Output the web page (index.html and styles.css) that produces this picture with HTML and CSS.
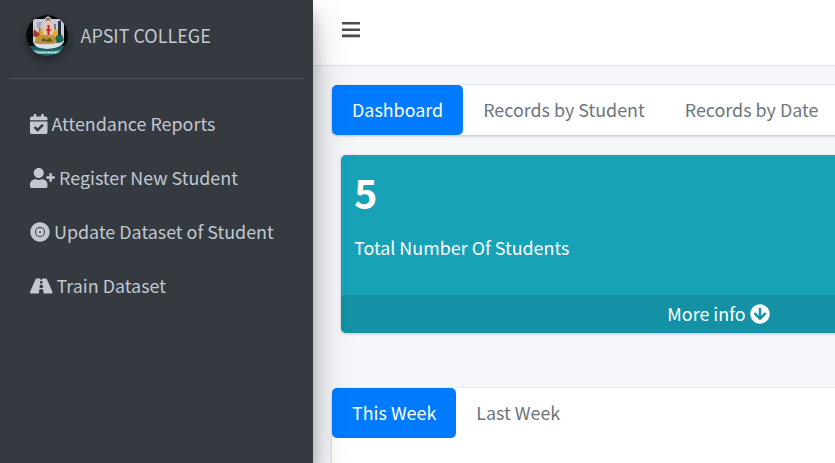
FILE: index.html
```html
<!DOCTYPE html>
<html lang="en">
<head>
<meta charset="utf-8">
<title>APSIT College</title>
<link rel="stylesheet" href="styles.css">
</head>
<body>
<div class="wrapper">
  <aside class="sidebar">
    <div class="brand">
      <svg class="logo" viewBox="0 0 42 41" preserveAspectRatio="none">
        <defs><clipPath id="disc"><ellipse cx="21" cy="20.5" rx="21" ry="20.5"/></clipPath></defs>
        <g clip-path="url(#disc)">
          <rect width="42" height="42" fill="#050608"/>
          <path d="M7 4l11 0 4-3 4 3 12 0v23q-3 6-16 9Q9 34 7 27z" fill="#c9cbd6"/>
          <path d="M11 7h5l-2 6h-3z" fill="#a3a6b2"/>
          <path d="M32 6h3v18h-3z" fill="#28313b"/>
          <path d="M28 9h2v6h-2z" fill="#777c88"/>
          <path d="M8 14l4 4 2-6 2 9-4 2-5-2z" fill="#a33a2e"/>
          <path d="M13 16l4-3h9l6 3 0 5-4 2H14z" fill="#e3a62c"/>
          <path d="M19 5q3-3 6 0l1 5 3 5-3 5h-8l-2-5 3-4z" fill="#e6c4ae"/>
          <path d="M19.500 4q2.500-3 5 0v1.500h-5z" fill="#8a6f60"/>
          <path d="M21.500 10h2v4l2 1-2 1v4h-2v-4l-2-1 2-1z" fill="#c3222b"/>
          <path d="M30 21l6-1 2 5-4 4-6-2z" fill="#1c6557"/>
          <path d="M11 21l8-1 9 1 3 6-4 2H12l-4-1z" fill="#b5943c"/>
          <path d="M16 24l3-1 1 2 4-2 3 3-5 1-3-1-3 1z" fill="#695325"/>
          <path d="M8 28q14 4 28-1-2 6-14 7Q11 34 8 28z" fill="#dedfe5"/>
          <path d="M0 31l8 0q13 6 27 0l7-1v12H0z" fill="#17605f"/>
          <path d="M7 35q15 2 29 0l-2 4H9z" fill="#62b5b5"/>
          <path d="M10 37.500h23" stroke="#c6e2df" stroke-width="1" stroke-dasharray="2 1"/>
        </g>
      </svg>
      <span class="brand-name">APSIT COLLEGE</span>
    </div>
    <nav class="menu">
      <a class="menu-item"><svg class="icon cal" viewBox="0 0 448 512"><path d="M436 160H12c-6.627 0-12-5.373-12-12v-36c0-26.51 21.49-48 48-48h48V12c0-6.627 5.373-12 12-12h40c6.627 0 12 5.373 12 12v52h128V12c0-6.627 5.373-12 12-12h40c6.627 0 12 5.373 12 12v52h48c26.51 0 48 21.49 48 48v36c0 6.627-5.373 12-12 12zM12 192h424c6.627 0 12 5.373 12 12v260c0 26.51-21.49 48-48 48H48c-26.51 0-48-21.49-48-48V204c0-6.627 5.373-12 12-12zm333.296 95.947l-28.169-28.398c-4.667-4.705-12.265-4.736-16.97-.068L194.12 364.665l-45.98-46.352c-4.667-4.705-12.266-4.736-16.971-.068l-28.397 28.17c-4.705 4.667-4.736 12.265-.068 16.97l82.601 83.269c4.667 4.705 12.265 4.736 16.97.068l142.953-141.805c4.705-4.667 4.736-12.265.068-16.97z"/></svg><span>Attendance Reports</span></a>
      <a class="menu-item"><svg class="icon user" viewBox="0 0 640 512"><path d="M624 208h-64v-64c0-8.8-7.2-16-16-16h-32c-8.8 0-16 7.2-16 16v64h-64c-8.8 0-16 7.2-16 16v32c0 8.8 7.2 16 16 16h64v64c0 8.8 7.2 16 16 16h32c8.8 0 16-7.2 16-16v-64h64c8.8 0 16-7.2 16-16v-32c0-8.8-7.2-16-16-16zm-400 48c70.7 0 128-57.3 128-128S294.7 0 224 0 96 57.3 96 128s57.3 128 128 128zm89.6 32h-16.7c-22.2 10.2-46.9 16-72.9 16s-50.6-5.8-72.9-16h-16.7C60.2 288 0 348.2 0 422.4V464c0 26.5 21.5 48 48 48h352c26.5 0 48-21.5 48-48v-41.6c0-74.2-60.2-134.4-134.4-134.4z"/></svg><span>Register New Student</span></a>
      <a class="menu-item"><svg class="icon" viewBox="0 0 512 512"><path d="M256 152a104 104 0 1 0 104 104 104 104 0 0 0-104-104zm0 128a24 24 0 1 1 24-24 24 24 0 0 1-24 24zm0-272C119 8 8 119 8 256s111 248 248 248 248-111 248-248S393 8 256 8zm0 376a128 128 0 1 1 128-128 128 128 0 0 1-128 128z"/></svg><span>Update Dataset of Student</span></a>
      <a class="menu-item"><svg class="icon road" viewBox="0 0 576 512"><path d="M573.19 402.67l-139.79-320C428.43 71.29 417.6 64 405.68 64h-97.59l2.45 23.16c.5 4.72-3.21 8.84-7.96 8.84h-29.16c-4.75 0-8.46-4.12-7.96-8.84L267.91 64h-97.59c-11.93 0-22.76 7.29-27.73 18.67L2.8 402.67C-6.45 423.86 8.31 448 30.54 448h196.84l10.31-97.68c.86-8.14 7.72-14.32 15.91-14.32h68.8c8.19 0 15.05 6.18 15.91 14.32L348.62 448h196.84c22.23 0 36.99-24.14 27.73-45.33zM260.4 135.16a8 8 0 0 1 7.96-7.16h39.29c4.09 0 7.53 3.09 7.96 7.16l4.6 43.58c.75 7.09-4.81 13.26-11.93 13.26h-40.54c-7.13 0-12.68-6.17-11.93-13.26l4.59-43.58zM315.64 304h-55.29c-9.5 0-16.91-8.23-15.91-17.68l5.07-48c.86-8.14 7.72-14.32 15.91-14.32h45.15c8.19 0 15.05 6.18 15.91 14.32l5.07 48c1 9.45-6.41 17.68-15.91 17.68z"/></svg><span>Train Dataset</span></a>
    </nav>
  </aside>
  <main class="main">
    <header class="topbar">
      <svg class="bars" viewBox="0 0 18 16"><path d="M0 0h18v2.6H0zM0 6.4h18V9H0zM0 12.6h18v2.6H0z"/></svg>
    </header>
    <section class="content">
      <div class="card tabs">
        <a class="tab active">Dashboard</a>
        <a class="tab">Records by Student</a>
        <a class="tab">Records by Date</a>
      </div>
      <div class="stat">
        <div class="stat-body">
          <h3 class="stat-value">5</h3>
          <p class="stat-label">Total Number Of Students</p>
        </div>
        <a class="stat-footer"><span>More info</span><svg class="icon" viewBox="0 0 512 512"><path fill-rule="evenodd" d="M504 256c0 137-111 248-248 248S8 393 8 256 119 8 256 8s248 111 248 248zm-143.6-28.9L288 302.6V120c0-13.3-10.7-24-24-24h-16c-13.3 0-24 10.7-24 24v182.6l-72.4-75.5c-9.3-9.7-24.8-9.9-34.3-.4l-10.9 11c-9.4 9.4-9.4 24.6 0 33.9L239.5 404.3c9.4 9.4 24.6 9.4 33.9 0l132.7-132.7c9.4-9.4 9.4-24.6 0-33.9l-10.9-11c-9.5-9.5-25-9.3-34.3.4z"/></svg></a>
      </div>
      <div class="card report">
        <div class="tabs">
          <a class="tab active">This Week</a>
          <a class="tab">Last Week</a>
        </div>
      </div>
    </section>
  </main>
</div>
</body>
</html>
```
FILE: styles.css
```css
* { box-sizing: border-box; }
body {
  margin: 0;
  overflow: hidden;
  background: #f4f6f9;
  font-family: "Noto Sans CJK SC", "Noto Sans", sans-serif;
  font-size: 17.9px;
  line-height: 30px;
}
.wrapper { display: flex; height: 463px; overflow: hidden; }
.sidebar {
  position: relative;
  z-index: 2;
  flex: 0 0 313px;
  padding: 0 10px;
  background: #343a40;
  color: #c2c7d0;
  box-shadow: 0 17.5px 35px rgba(0, 0, 0, .25), 0 12.5px 12.5px rgba(0, 0, 0, .22);
}
.brand {
  display: flex;
  align-items: center;
  gap: 12.5px;
  height: 79px;
  padding: 0 0 8px 16px;
  border-bottom: 1px solid #4b545c;
}
.brand-name { font-size: 18px; }
.logo {
  width: 42px;
  height: 41px;
  border-radius: 50%;
  box-shadow: 0 4px 8px rgba(0, 0, 0, .23), 0 4px 8px rgba(0, 0, 0, .16);
}
.menu { display: flex; flex-direction: column; gap: 4px; padding-top: 20px; }
.menu-item {
  display: flex;
  align-items: center;
  gap: 4px;
  height: 50px;
  padding-left: 20px;
  white-space: nowrap;
}
.menu-item span, .stat-footer span { margin-bottom: 2px; }
.icon { flex: none; width: 20px; height: 20px; fill: currentColor; }
.cal { width: 17.5px; }
.user { width: 25px; }
.road { width: 22.5px; }
.main { flex: 1; min-width: 0; }
.topbar {
  display: flex;
  height: 66px;
  padding: 22px 0 0 29px;
  background: #fff;
  border-bottom: 1px solid #dee2e6;
}
.bars { width: 18px; height: 16px; fill: #4d4d4d; }
.content { width: 792px; padding: 19px 0 0 19px; }
.card {
  border-radius: 5px;
  background: #fff;
  box-shadow: 0 0 1px rgba(0, 0, 0, .13), 0 1px 3px rgba(0, 0, 0, .2);
}
.tabs { display: flex; }
.tab { height: 50px; padding: 9px 20px; border-radius: 5px; color: #6c757d; white-space: nowrap; }
.tab.active { background: #007bff; color: #fff; }
.stat {
  width: 755px;
  margin: 20px 0 55px 9px;
  overflow: hidden;
  border-radius: 5px;
  background: #17a2b8;
  color: #fff;
  box-shadow: 0 0 1px rgba(0, 0, 0, .13), 0 1px 3px rgba(0, 0, 0, .2);
}
.stat-body { height: 140px; padding: 10px 13px; }
.stat-value { margin: 0 0 14px; font-size: 39.6px; line-height: 53px; }
.stat-label { margin: 0; }
.stat-footer {
  display: flex;
  align-items: center;
  justify-content: center;
  gap: 4px;
  height: 38px;
  background: rgba(0, 0, 0, .1);
}
.report { height: 200px; }
```
